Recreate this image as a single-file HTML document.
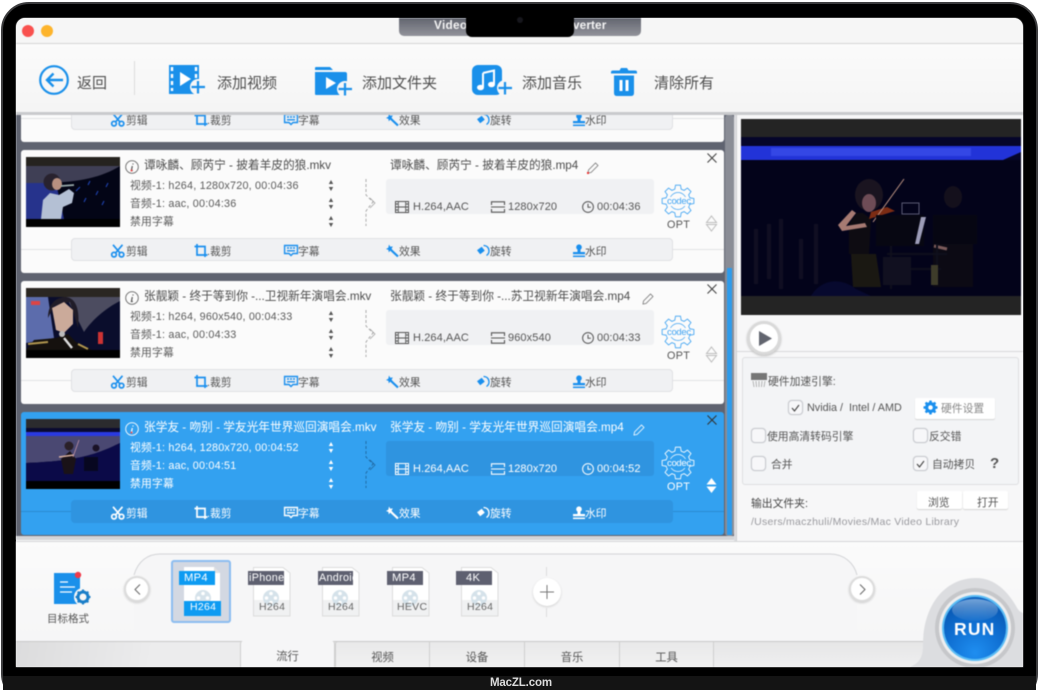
<!DOCTYPE html>
<html lang="zh"><head><meta charset="utf-8"><title>Video Converter</title>
<style>
*{box-sizing:border-box}
html,body{margin:0;padding:0;background:#fff;width:1040px;height:690px;overflow:hidden}
body{font-family:"Liberation Sans","Noto Sans CJK SC",sans-serif;color:#555;position:relative}
.a,.t{position:absolute}
.t{white-space:nowrap;line-height:16px;margin-top:-8px}
#bezel{left:1px;top:2px;width:1037px;height:700px;background:#000;border:2px solid #3c3c3e;border-radius:28px}
#chin{left:3px;top:676px;width:1033px;height:14px;background:#141414}
#scr{left:16px;top:18px;width:1007px;height:649px;background:#f6f6f6;border-radius:9px 9px 0 0;overflow:hidden}
#ui{left:0;top:0;width:1040px;height:690px;filter:blur(.4px)}
.tb{font-size:15px;color:#4f4f4f}
.list{left:16px;top:115px;width:718px;height:425px;background:#5f6370;overflow:hidden}
.c{left:-16px;width:0;height:0}
.c .bg{position:absolute;left:21px;top:0;width:703px;height:123px;background:#fbfbfb;border-radius:3px}
.c .ln{position:absolute;left:21px;top:99px;width:703px;height:1px;background:#e2e3e5}
.c .bar{position:absolute;left:71px;top:88px;width:602px;height:23px;background:#f0f1f3;border:1px solid #e0e1e4;border-radius:4px}
.c .box{position:absolute;left:386px;top:29px;width:268px;height:35px;background:#f0f1f3;border-radius:3px}
.c .th{position:absolute;left:26px;top:7px;width:94px;height:70px;display:block}
.c .ti{font-size:11.7px;color:#4c4c4c;top:16px}
.c .r{font-size:10.8px;letter-spacing:.2px;color:#5a5a5a;left:130px}
.c .m{font-size:11px;letter-spacing:.1px;color:#555;top:47px}
.c .k{font-size:10.8px;color:#555;top:102px}
.c svg{position:absolute;overflow:visible}
.c .ic{color:#1a8fee}
.c .g{color:#555}
.c .gc{color:#3fa3f2}
.c .opt{font-size:10.8px;color:#555;left:667px;top:75px;letter-spacing:.3px}
.c .cd{font-size:9.5px;color:#3fa3f2;left:667px;top:51px;width:22px;text-align:center;letter-spacing:-.3px;line-height:9px;margin-top:-4px;background:#fbfbfb}
.s .bg{background:#33a1f0}
.s .ln{background:#2a8ad2}
.s .bar,.s .box{background:#2f94e0;border-color:#2f94e0}
.s .ti,.s .r,.s .m,.s .k,.s .opt{color:#fff}
.s .cd{color:#fff;background:#33a1f0}
.s .ic,.s .g,.s .gc{color:#fff}
.cb{position:absolute;width:15px;height:15px;background:#f7f7f9;border:1px solid #c8cad0;border-radius:4px;box-shadow:0 0 1px #ccc}
.p{font-size:10.8px;color:#555}
.btn{position:absolute;background:#fff;box-shadow:0 1px 1px #d5d5d5;border-radius:2px}
.fmt{font-size:10.5px;letter-spacing:.3px}
.tab{position:absolute;top:641px;height:26px;width:95px;text-align:center;font-size:11.3px;line-height:32px;color:#555;background:linear-gradient(#e9e9ea,#f1f1f1);border-right:1px solid #cfcfcf;border-top:1px solid #c9c9c9}
</style></head><body>
<svg width="0" height="0" style="position:absolute"><defs>
<symbol id="sc" viewBox="0 0 14 14" overflow="visible"><circle cx="3" cy="10.6" r="2.3" fill="none" stroke="currentColor" stroke-width="1.7"/><circle cx="10.5" cy="10.6" r="2.3" fill="none" stroke="currentColor" stroke-width="1.7"/><path d="M2 .8L9 9M11.5.8L4.5 9" stroke="currentColor" stroke-width="1.7" fill="none"/></symbol>
<symbol id="cr" viewBox="0 0 14 14" overflow="visible"><path d="M.5 2.5H11V13M3 0V11H13.5" stroke="currentColor" stroke-width="1.7" fill="none"/></symbol>
<symbol id="su" viewBox="0 0 14 14" overflow="visible"><path d="M.6 1.5H13.4V9.5H9L7 11.5 5 9.5H.6Z" fill="none" stroke="currentColor" stroke-width="1.4"/><path d="M3 4H5M6 4H8M9 4H11M3 6.8H11" stroke="currentColor" stroke-width="1.4"/></symbol>
<symbol id="wa" viewBox="0 0 14 14" overflow="visible"><path d="M5.5 5.5L13 12.5" stroke="currentColor" stroke-width="2.2"/><path d="M4 .5L5.3 2.8 7.8 2.4 6.6 4.7 8 6.8 5.4 6.4 3.8 8.4 3.4 5.9 1 5 3.3 3.7Z" fill="currentColor"/></symbol>
<symbol id="ro" viewBox="0 0 14 14" overflow="visible"><path d="M1 6.3L5.7 2.7 8.8 6.6 4.2 10.2Z" fill="currentColor"/><path d="M7.5 1.5C11 1.5 13 4 13 7 13 9 12 10.5 10.5 11.5" fill="none" stroke="currentColor" stroke-width="1.3"/></symbol>
<symbol id="st" viewBox="0 0 14 14" overflow="visible"><circle cx="7" cy="3.2" r="2.8" fill="currentColor"/><path d="M5.5 5H8.5V8H13V10.3H1V8H5.5Z" fill="currentColor"/><path d="M1 12.3H13" stroke="currentColor" stroke-width="1.5"/></symbol>
<symbol id="fi" viewBox="0 0 14 12" overflow="visible"><rect x=".5" y=".5" width="13" height="11" fill="none" stroke="currentColor"/><path d="M3.3.5V11.5M10.7.5V11.5M3.3 6H10.7M.5 3H3.3M.5 6H3.3M.5 9H3.3M10.7 3H13.5M10.7 6H13.5M10.7 9H13.5" stroke="currentColor" stroke-width=".9"/></symbol>
<symbol id="si" viewBox="0 0 14 12" overflow="visible"><path d="M.5 4V.8H13.5V4M.5 8V11.2H13.5V8M0 6H14" fill="none" stroke="currentColor" stroke-width="1.1"/></symbol>
<symbol id="cl" viewBox="0 0 12 12" overflow="visible"><circle cx="6" cy="6" r="5.4" fill="none" stroke="currentColor" stroke-width="1"/><path d="M6 2.8V6.3H8.8" fill="none" stroke="currentColor"/></symbol>
<symbol id="gr" viewBox="-18 -18 36 36" overflow="visible"><path d="M-3.36-12.56L-2.66-16.79 2.66-16.79 3.36-12.56 6.5-11.26 9.99-13.75 13.75-9.99 11.26-6.5 12.56-3.36 16.79-2.66 16.79 2.66 12.56 3.36 11.26 6.5 13.75 9.99 9.99 13.75 6.5 11.26 3.36 12.56 2.66 16.79-2.66 16.79-3.36 12.56-6.5 11.26-9.99 13.75-13.75 9.99-11.26 6.5-12.56 3.36-16.79 2.66-16.79-2.66-12.56-3.36-11.26-6.5-13.75-9.99-9.99-13.75-6.5-11.26Z" fill="none" stroke="currentColor" stroke-width=".9"/><circle r="9" fill="none" stroke="currentColor" stroke-width=".7"/></symbol>
<symbol id="ud" viewBox="0 0 6 13" overflow="visible"><path d="M3 1L5.2 5H.8ZM3 12L5.2 8H.8Z" fill="currentColor"/></symbol>
<symbol id="dc" viewBox="0 0 12 18" overflow="visible"><path d="M1 0V16L5 20 8 23 4 28 1 32V47" fill="none" stroke="currentColor" stroke-width=".8" stroke-dasharray="3 2"/><path d="M5 19L10 24 5 29" fill="none" stroke="currentColor" stroke-width=".7"/></symbol>
<symbol id="pe" viewBox="0 0 12 12" overflow="visible"><path d="M1.5 8L8.5 1 11 3.5 4 10.5 1 11Z" fill="none" stroke="currentColor" stroke-width=".8"/></symbol>
<symbol id="reel" viewBox="0 0 18 18" overflow="visible"><circle cx="9" cy="9" r="8" fill="#d5e2ea"/><circle cx="9" cy="4.5" r="1.8" fill="#fff"/><circle cx="9" cy="13.5" r="1.8" fill="#fff"/><circle cx="4.5" cy="9" r="1.8" fill="#fff"/><circle cx="13.5" cy="9" r="1.8" fill="#fff"/></symbol>
</defs></svg>

<div class="a" id="bezel"></div>
<div class="a" id="chin"></div>
<div class="t" style="left:490px;top:683px;color:#ddd;font-size:11.5px;font-weight:bold;letter-spacing:-.15px">MacZL.com</div>
<div class="a" id="scr"></div>

<div class="a" id="ui">
<!-- title bar -->
<div class="a" style="left:16px;top:18px;width:1007px;height:26px;background:#f6f6f6;border-bottom:1px solid #d4d4d4;border-radius:9px 9px 0 0"></div>
<div class="a" style="left:399px;top:18px;width:242px;height:18px;background:linear-gradient(#62656f,#92939b);border-radius:0 0 5px 5px"></div>
<div class="t" style="left:434px;top:25px;color:#f4f4f4;font-size:11.8px;font-weight:bold;letter-spacing:.3px">Video</div>
<div class="t" style="left:573px;top:25px;color:#f4f4f4;font-size:11.8px;font-weight:bold;letter-spacing:.1px">verter</div>
<div class="a" style="left:466px;top:14px;width:108px;height:23px;background:#000;border-radius:0 0 6px 6px"></div>
<div class="a" style="left:517px;top:17px;width:6px;height:6px;border-radius:50%;background:#16161c"></div>
<div class="a" style="left:22px;top:25px;width:12px;height:12px;border-radius:50%;background:#f9514e"></div>
<div class="a" style="left:41px;top:25px;width:12px;height:12px;border-radius:50%;background:#fdb42c"></div>

<!-- toolbar -->
<div class="a" style="left:16px;top:44px;width:1007px;height:68px;background:linear-gradient(#fbfbfb,#f5f5f5)"></div>
<div class="a" style="left:16px;top:112px;width:1007px;height:3px;background:#c9cacd"></div>
<div class="a" style="left:134px;top:61px;width:1px;height:34px;background:#dcdcdc"></div>
<svg class="a" style="left:38px;top:64px" width="32" height="32" viewBox="0 0 32 32"><circle cx="16" cy="16" r="13.8" fill="none" stroke="#1a90ea" stroke-width="2.2"/><path d="M25 16H9M15.5 9.5L9 16 15.5 22.5" fill="none" stroke="#1a90ea" stroke-width="2.4"/></svg>
<div class="t tb" style="left:77px;top:84px">返回</div>
<svg class="a" style="left:169px;top:65px" width="37" height="30" viewBox="0 0 37 30"><rect x="0" y="0" width="30" height="29" fill="#1a90ea"/><path d="M3 2v4M3 9v4M3 16v4M3 23v3M27 2v4M27 9v4" stroke="#fff" stroke-width="2.4"/><path d="M11 7L22 14 11 21Z" fill="#fff"/><circle cx="29" cy="22" r="8" fill="#f7f7f7"/><path d="M29 16V28.5M22.5 22H36" stroke="#1a90ea" stroke-width="2.2"/></svg>
<div class="t tb" style="left:217px;top:84px">添加视频</div>
<svg class="a" style="left:315px;top:66px" width="38" height="30" viewBox="0 0 38 30"><path d="M0 2Q0 1 1 1H15L18 4H0Z" fill="#1a90ea"/><path d="M0 6H30Q32 6 32 8V29H1Q0 29 0 28Z" fill="#1a90ea"/><path d="M11 11L21 17 11 23Z" fill="#fff"/><circle cx="30" cy="23" r="8" fill="#f7f7f7"/><path d="M30 17V29.5M23.5 23H37" stroke="#1a90ea" stroke-width="2.2"/></svg>
<div class="t tb" style="left:362px;top:84px">添加文件夹</div>
<svg class="a" style="left:472px;top:65px" width="41" height="31" viewBox="0 0 41 31"><rect width="30" height="30" rx="6" fill="#1a90ea"/><path d="M11 8L22 5.5V19" fill="none" stroke="#fff" stroke-width="2"/><path d="M11 8V22" stroke="#fff" stroke-width="2"/><ellipse cx="8.5" cy="22.5" rx="3.5" ry="2.8" fill="#fff"/><ellipse cx="19.5" cy="19.5" rx="3.5" ry="2.8" fill="#fff"/><circle cx="33" cy="23" r="8" fill="#f7f7f7"/><path d="M33 17V29.5M26.5 23H40" stroke="#1a90ea" stroke-width="2.2"/></svg>
<div class="t tb" style="left:522px;top:84px">添加音乐</div>
<svg class="a" style="left:611px;top:67px" width="26" height="30" viewBox="0 0 26 30"><path d="M0 5Q0 3.5 2 3.5H8.5L10 1H16L17.5 3.5H24Q26 3.5 26 5V6.5H0Z" fill="#1a90ea"/><path d="M3 8.5H23V26Q23 29 20 29H6Q3 29 3 26Z" fill="#1a90ea"/><rect x="8.5" y="13" width="3" height="11" fill="#fff"/><rect x="14.5" y="13" width="3" height="11" fill="#fff"/></svg>
<div class="t tb" style="left:654px;top:84px">清除所有</div>

<!-- list -->
<div class="a list">
<!-- card 1 -->
<div class="a c" style="top:-96px"><div class="bg"></div><div class="ln"></div><div class="bar"></div>
<svg class="ic" style="left:111px;top:94px" width="14" height="14"><use href="#sc"/></svg><div class="t k" style="left:126px">剪辑</div>
<svg class="ic" style="left:194px;top:94px" width="14" height="14"><use href="#cr"/></svg><div class="t k" style="left:207px">.裁剪</div>
<svg class="ic" style="left:284px;top:94px" width="14" height="14"><use href="#su"/></svg><div class="t k" style="left:298px">字幕</div>
<svg class="ic" style="left:385px;top:94px" width="14" height="14"><use href="#wa"/></svg><div class="t k" style="left:399px">效果</div>
<svg class="ic" style="left:476px;top:94px" width="14" height="14"><use href="#ro"/></svg><div class="t k" style="left:490px">旋转</div>
<svg class="ic" style="left:572px;top:94px" width="14" height="14"><use href="#st"/></svg><div class="t k" style="left:585px">水印</div>
</div>

<!-- card 2 -->
<div class="a c" style="top:35px"><div class="bg"></div><div class="ln"></div><div class="bar"></div>
<svg class="th" viewBox="0 0 94 70"><rect width="94" height="70" fill="#030516"/><rect width="94" height="9" fill="#25231f"/><path d="M0 9H94C76 20 55 25 20 26L0 26Z" fill="#3f3f55"/><path d="M0 26H30L38 62H0Z" fill="#26338c"/><path d="M50 34L54 30M62 28L64 24M70 38L72 34M80 30L82 26M58 45L60 41M76 48L78 44" stroke="#1d3fa8" stroke-width="1.2"/><circle cx="26" cy="25" r="8.5" fill="#28222e"/><ellipse cx="31" cy="27" rx="5" ry="6" fill="#b89080"/><path d="M15 62L17 43 24 36 33 38 43 32 48 36 46 46 37 50 35 62Z" fill="#b4c0d4"/><path d="M35 29L48 28" stroke="#9aa" stroke-width="1.8"/><rect y="62" width="94" height="8" fill="#000"/></svg>
<svg style="left:125px;top:10px" width="14" height="14" viewBox="0 0 14 14"><circle cx="7" cy="7" r="6.3" fill="none" stroke="#666" stroke-width=".9"/><path d="M8 3.5V4.5M7.3 6L6.4 10.5H7.8" fill="none" stroke="#555" stroke-width="1.2"/><circle cx="6.5" cy="10.5" r="1" fill="#e44"/></svg>
<div class="t ti" style="left:144px">谭咏麟、顾芮宁 - 披着羊皮的狼.mkv</div>
<div class="t r" style="top:36px">视频-1: h264, 1280x720, 00:04:36</div><svg class="g" style="left:328px;top:29px" width="6" height="13"><use href="#ud"/></svg>
<div class="t r" style="top:54px">音频-1: aac, 00:04:36</div><svg class="g" style="left:328px;top:47px" width="6" height="13"><use href="#ud"/></svg>
<div class="t r" style="top:72px">禁用字幕</div><svg class="g" style="left:328px;top:65px" width="6" height="13"><use href="#ud"/></svg>
<svg style="left:365px;top:29px;color:#999" width="12" height="18"><use href="#dc"/></svg>
<div class="t ti" style="left:390px">谭咏麟、顾芮宁 - 披着羊皮的狼.mp4</div>
<svg style="left:587px;top:12px;color:#777" width="12" height="12"><use href="#pe"/></svg><div class="a" style="left:587px;top:22px;width:2px;height:2px;background:#e33"></div>
<div class="box"></div>
<svg class="g" style="left:395px;top:51px" width="14" height="12"><use href="#fi"/></svg><div class="t m" style="left:413px;top:57px">H.264,AAC</div>
<svg class="g" style="left:491px;top:51px" width="14" height="12"><use href="#si"/></svg><div class="t m" style="left:508px;top:57px">1280x720</div>
<svg class="g" style="left:582px;top:51px" width="12" height="12"><use href="#cl"/></svg><div class="t m" style="left:597px;top:57px">00:04:36</div>
<svg class="gc" style="left:661px;top:34px" width="34" height="34"><use href="#gr"/></svg><div class="t cd">codec</div><div class="t opt">OPT</div>
<svg style="left:706px;top:65px;color:#bbb" width="11" height="17" viewBox="0 0 11 17"><path d="M5.5 1L10.5 7.5H.5ZM5.5 16L10.5 9.5H.5Z" fill="none" stroke="currentColor"/></svg>
<svg style="left:707px;top:3px;color:#444" width="10" height="10" viewBox="0 0 10 10"><path d="M.5.5L9.5 9.5M9.5.5L.5 9.5" stroke="currentColor" stroke-width="1.1"/></svg>
<svg class="ic" style="left:111px;top:94px" width="14" height="14"><use href="#sc"/></svg><div class="t k" style="left:126px">剪辑</div>
<svg class="ic" style="left:194px;top:94px" width="14" height="14"><use href="#cr"/></svg><div class="t k" style="left:207px">.裁剪</div>
<svg class="ic" style="left:284px;top:94px" width="14" height="14"><use href="#su"/></svg><div class="t k" style="left:298px">字幕</div>
<svg class="ic" style="left:385px;top:94px" width="14" height="14"><use href="#wa"/></svg><div class="t k" style="left:399px">效果</div>
<svg class="ic" style="left:476px;top:94px" width="14" height="14"><use href="#ro"/></svg><div class="t k" style="left:490px">旋转</div>
<svg class="ic" style="left:572px;top:94px" width="14" height="14"><use href="#st"/></svg><div class="t k" style="left:585px">水印</div>
</div>

<!-- card 3 -->
<div class="a c" style="top:166px"><div class="bg"></div><div class="ln"></div><div class="bar"></div>
<svg class="th" viewBox="0 0 94 70"><rect width="94" height="70" fill="#0a0d2c"/><rect width="94" height="9" fill="#2a2622"/><path d="M40 9H94V13C80 20 66 32 58 44L48 24Z" fill="#4c4c60"/><path d="M0 9H22L28 50 0 55Z" fill="#5c6cac"/><path d="M22 30C22 14 32 9 40 9 50 10 54 22 52 40L44 14 28 18Z" fill="#201c28"/><path d="M26 20L38 14 47 22 47 36 38 45 30 42Z" fill="#cbaa9a"/><path d="M0 62L8 52 30 50 42 46 50 54 66 62Z" fill="#15110e"/><path d="M2 56L22 54M52 56L62 61" stroke="#b0964f" stroke-width="2"/><path d="M38 50L46 60" stroke="#ddd" stroke-width="2.5"/><circle cx="36" cy="46" r="3" fill="#bbb"/><rect x="72" y="44" width="5" height="12" fill="#c33"/><rect x="5" y="13" width="9" height="4" fill="#d44"/><rect y="62" width="94" height="8" fill="#000"/></svg>
<svg style="left:125px;top:10px" width="14" height="14" viewBox="0 0 14 14"><circle cx="7" cy="7" r="6.3" fill="none" stroke="#666" stroke-width=".9"/><path d="M8 3.5V4.5M7.3 6L6.4 10.5H7.8" fill="none" stroke="#555" stroke-width="1.2"/></svg>
<div class="t ti" style="left:144px">张靓颖 - 终于等到你 -...卫视新年演唱会.mkv</div>
<div class="t r" style="top:36px">视频-1: h264, 960x540, 00:04:33</div><svg class="g" style="left:328px;top:29px" width="6" height="13"><use href="#ud"/></svg>
<div class="t r" style="top:54px">音频-1: aac, 00:04:33</div><svg class="g" style="left:328px;top:47px" width="6" height="13"><use href="#ud"/></svg>
<div class="t r" style="top:72px">禁用字幕</div><svg class="g" style="left:328px;top:65px" width="6" height="13"><use href="#ud"/></svg>
<svg style="left:365px;top:29px;color:#999" width="12" height="18"><use href="#dc"/></svg>
<div class="t ti" style="left:390px">张靓颖 - 终于等到你 -...苏卫视新年演唱会.mp4</div>
<svg style="left:642px;top:12px;color:#777" width="12" height="12"><use href="#pe"/></svg>
<div class="box"></div>
<svg class="g" style="left:395px;top:51px" width="14" height="12"><use href="#fi"/></svg><div class="t m" style="left:413px;top:57px">H.264,AAC</div>
<svg class="g" style="left:491px;top:51px" width="14" height="12"><use href="#si"/></svg><div class="t m" style="left:508px;top:57px">960x540</div>
<svg class="g" style="left:582px;top:51px" width="12" height="12"><use href="#cl"/></svg><div class="t m" style="left:597px;top:57px">00:04:33</div>
<svg class="gc" style="left:661px;top:34px" width="34" height="34"><use href="#gr"/></svg><div class="t cd">codec</div><div class="t opt">OPT</div>
<svg style="left:706px;top:65px;color:#bbb" width="11" height="17" viewBox="0 0 11 17"><path d="M5.5 1L10.5 7.5H.5ZM5.5 16L10.5 9.5H.5Z" fill="none" stroke="currentColor"/></svg>
<svg style="left:707px;top:3px;color:#444" width="10" height="10" viewBox="0 0 10 10"><path d="M.5.5L9.5 9.5M9.5.5L.5 9.5" stroke="currentColor" stroke-width="1.1"/></svg>
<svg class="ic" style="left:111px;top:94px" width="14" height="14"><use href="#sc"/></svg><div class="t k" style="left:126px">剪辑</div>
<svg class="ic" style="left:194px;top:94px" width="14" height="14"><use href="#cr"/></svg><div class="t k" style="left:207px">.裁剪</div>
<svg class="ic" style="left:284px;top:94px" width="14" height="14"><use href="#su"/></svg><div class="t k" style="left:298px">字幕</div>
<svg class="ic" style="left:385px;top:94px" width="14" height="14"><use href="#wa"/></svg><div class="t k" style="left:399px">效果</div>
<svg class="ic" style="left:476px;top:94px" width="14" height="14"><use href="#ro"/></svg><div class="t k" style="left:490px">旋转</div>
<svg class="ic" style="left:572px;top:94px" width="14" height="14"><use href="#st"/></svg><div class="t k" style="left:585px">水印</div>
</div>

<!-- card 4 selected -->
<div class="a c s" style="top:297px"><div class="bg"></div><div class="ln"></div><div class="bar"></div>
<svg class="th" viewBox="0 0 94 70"><rect width="94" height="70" fill="#04041c"/><rect width="94" height="9" fill="#2b2b2e"/><rect y="9" width="94" height="4" fill="#0a0a30"/><rect y="13" width="94" height="4" fill="#2a3ae0"/><path d="M0 17H94V24C70 36 50 42 0 44Z" fill="#4a4872"/><path d="M0 44C50 42 70 36 94 24V62H0Z" fill="#0b0a48"/><circle cx="43" cy="27" r="4.5" fill="#2a2028"/><path d="M35 40L44 32 50 40 47 55H38Z" fill="#1a1218"/><path d="M33 38L48 36" stroke="#d8b0a0" stroke-width="1.6"/><path d="M47 38L53 21" stroke="#c9a" stroke-width=".7"/><rect x="58" y="38" width="14" height="14" fill="#070720"/><circle cx="70" cy="29" r="3.5" fill="#1a1226"/><rect y="62" width="94" height="8" fill="#000"/></svg>
<svg style="left:125px;top:10px" width="14" height="14" viewBox="0 0 14 14"><circle cx="7" cy="7" r="6.3" fill="none" stroke="#fff" stroke-width=".9"/><path d="M8 3.5V4.5M7.3 6L6.4 10.5H7.8" fill="none" stroke="#fff" stroke-width="1.2"/><circle cx="6.5" cy="10.5" r="1" fill="#e44"/></svg>
<div class="t ti" style="left:144px">张学友 - 吻别 - 学友光年世界巡回演唱会.mkv</div>
<div class="t r" style="top:36px">视频-1: h264, 1280x720, 00:04:52</div><svg class="g" style="left:328px;top:29px" width="6" height="13"><use href="#ud"/></svg>
<div class="t r" style="top:54px">音频-1: aac, 00:04:51</div><svg class="g" style="left:328px;top:47px" width="6" height="13"><use href="#ud"/></svg>
<div class="t r" style="top:72px">禁用字幕</div><svg class="g" style="left:328px;top:65px" width="6" height="13"><use href="#ud"/></svg>
<svg style="left:365px;top:29px;color:#1d5f94" width="12" height="18"><use href="#dc"/></svg>
<div class="t ti" style="left:390px">张学友 - 吻别 - 学友光年世界巡回演唱会.mp4</div>
<svg style="left:633px;top:12px;color:#fff" width="12" height="12"><use href="#pe"/></svg>
<div class="box"></div>
<svg class="g" style="left:395px;top:51px" width="14" height="12"><use href="#fi"/></svg><div class="t m" style="left:413px;top:57px">H.264,AAC</div>
<svg class="g" style="left:491px;top:51px" width="14" height="12"><use href="#si"/></svg><div class="t m" style="left:508px;top:57px">1280x720</div>
<svg class="g" style="left:582px;top:51px" width="12" height="12"><use href="#cl"/></svg><div class="t m" style="left:597px;top:57px">00:04:52</div>
<svg class="gc" style="left:661px;top:34px" width="34" height="34"><use href="#gr"/></svg><div class="t cd">codec</div><div class="t opt">OPT</div>
<svg style="left:706px;top:65px;color:#fff" width="11" height="17" viewBox="0 0 11 17"><path d="M5.5 1L10.5 7.5H.5ZM5.5 16L10.5 9.5H.5Z" fill="currentColor"/></svg>
<svg style="left:707px;top:3px;color:#333" width="10" height="10" viewBox="0 0 10 10"><path d="M.5.5L9.5 9.5M9.5.5L.5 9.5" stroke="currentColor" stroke-width="1.1"/></svg>
<svg class="ic" style="left:111px;top:94px" width="14" height="14"><use href="#sc"/></svg><div class="t k" style="left:126px">剪辑</div>
<svg class="ic" style="left:194px;top:94px" width="14" height="14"><use href="#cr"/></svg><div class="t k" style="left:207px">.裁剪</div>
<svg class="ic" style="left:284px;top:94px" width="14" height="14"><use href="#su"/></svg><div class="t k" style="left:298px">字幕</div>
<svg class="ic" style="left:385px;top:94px" width="14" height="14"><use href="#wa"/></svg><div class="t k" style="left:399px">效果</div>
<svg class="ic" style="left:476px;top:94px" width="14" height="14"><use href="#ro"/></svg><div class="t k" style="left:490px">旋转</div>
<svg class="ic" style="left:572px;top:94px" width="14" height="14"><use href="#st"/></svg><div class="t k" style="left:585px">水印</div>
</div>
<!-- scrollbar -->
<div class="a" style="left:709px;top:0;width:9px;height:421px;background:#8a8d96;border-radius:3px"></div>
<div class="a" style="left:711px;top:153px;width:5px;height:267px;background:#2d9bec"></div>
<div class="a" style="left:0;top:421px;width:718px;height:4px;background:#d4d5d8"></div>
</div>

<!-- right pane -->
<div class="a" style="left:734px;top:115px;width:289px;height:426px;background:#f7f7f8;border-left:2px solid #dcdde0"></div>
<div class="a" style="left:736px;top:115px;width:1px;height:426px;background:#cfd0d3"></div>
<svg class="a" style="left:741px;top:119px" width="280" height="196" viewBox="0 0 280 196">
<rect width="280" height="196" fill="#03031a"/><rect width="280" height="18" fill="#242424"/><rect y="18" width="280" height="9" fill="#05052a"/>
<rect y="27" width="280" height="14" fill="#2233d8"/><rect y="29" x="30" width="200" height="8" fill="#3a4ce8" opacity=".8"/><path d="M262 41L280 33V41Z" fill="#05052a"/>
<path d="M15 110V165M28 105V160M40 100V170M60 120V160M75 105V165" stroke="#100e22" stroke-width="4"/>
<ellipse cx="128" cy="76" rx="14" ry="16" fill="#1a1420"/><ellipse cx="128" cy="84" rx="7" ry="9" fill="#6e4c56"/>
<path d="M108 105L116 94 122 94 130 100 128 135H108Z" fill="#0e0c12"/><path d="M97 106L111 91 115 94 105 107 124 104 126 108 101 112Z" fill="#a67a72"/>
<path d="M128 100L154 92 146 88 130 93Z" fill="#7c2c14"/><path d="M132 103L163 60" stroke="#b89080" stroke-width="1"/>
<path d="M110 135H135L140 168H112Z" fill="#1a1812"/>
<path d="M135 96H183V127H135Z" fill="#070712"/><path d="M180 98L174 125 178 125 185 98Z" fill="#9c9cb8"/><rect x="161" y="84" width="17" height="11" fill="none" stroke="#5a5a74"/>
<ellipse cx="212" cy="78" rx="9" ry="11" fill="#14101c"/><path d="M192 96H236V125H192Z" fill="#060612"/><path d="M192 125H232V168H192Z" fill="#0c0a14"/><path d="M193 127L206 130" stroke="#7a5a5a" stroke-width="3"/>
<path d="M150 127V170M196 125V165M146 135H206M160 150H200" stroke="#0f0f1c" stroke-width="2"/><rect x="190" y="146" width="7" height="20" fill="#3e3c2a"/><rect x="142" y="138" width="28" height="28" fill="#111020"/>
<rect y="177" width="280" height="19" fill="#242424"/><path d="M70 177C80 160 100 158 115 170L130 177Z" fill="#07092e"/>
</svg>
<div class="a" style="left:737px;top:351px;width:286px;height:1px;background:#d9d9db"></div>
<div class="a" style="left:747px;top:321px;width:34px;height:34px;border-radius:50%;background:#fff;border:3px solid #d9d9d9;box-shadow:0 1px 2px #bbb"></div>
<svg class="a" style="left:759px;top:331px" width="13" height="15"><path d="M0 0L13 7.5 0 15Z" fill="#62656f"/></svg>
<div class="a" style="left:742px;top:357px;width:277px;height:128px;background:#f3f4f6;border:1px solid #dedfe2;border-radius:3px"></div>
<svg class="a" style="left:751px;top:373px" width="17" height="15" viewBox="0 0 17 15"><rect x="0" y="0" width="16" height="7" fill="#767676"/><path d="M2 8L3 14M5 8L5.5 14M8 8V14M11 8L10.5 14M14 8L13 14" stroke="#999" stroke-width=".7"/></svg>
<div class="t p" style="left:768px;top:382px">硬件加速引擎:</div>
<div class="cb" style="left:788px;top:400px"></div><svg class="a" style="left:791px;top:404px" width="9" height="8"><path d="M1 4L3.5 7 8 1" fill="none" stroke="#444" stroke-width="1.1"/></svg>
<div class="t p" style="left:807px;top:408px">Nvidia /&nbsp; Intel / AMD</div>
<div class="btn" style="left:915px;top:398px;width:80px;height:21px"></div>
<svg class="a" style="left:923px;top:400px;color:#1a8fee" width="15" height="15" viewBox="-18 -18 36 36"><path d="M-3.36-12.56L-2.66-16.79 2.66-16.79 3.36-12.56 6.5-11.26 9.99-13.75 13.75-9.99 11.26-6.5 12.56-3.36 16.79-2.66 16.79 2.66 12.56 3.36 11.26 6.5 13.75 9.99 9.99 13.75 6.5 11.26 3.36 12.56 2.66 16.79-2.66 16.79-3.36 12.56-6.5 11.26-9.99 13.75-13.75 9.99-11.26 6.5-12.56 3.36-16.79 2.66-16.79-2.66-12.56-3.36-11.26-6.5-13.75-9.99-9.99-13.75-6.5-11.26Z" fill="currentColor"/><circle r="5.5" fill="#fff"/></svg>
<div class="t p" style="left:941px;top:409px;color:#888">硬件设置</div>
<div class="cb" style="left:751px;top:428px"></div><div class="t p" style="left:767px;top:437px">使用高清转码引擎</div>
<div class="cb" style="left:913px;top:428px"></div><div class="t p" style="left:929px;top:437px">反交错</div>
<div class="cb" style="left:751px;top:456px"></div><div class="t p" style="left:771px;top:465px">合并</div>
<div class="cb" style="left:913px;top:456px"></div><svg class="a" style="left:916px;top:460px" width="9" height="8"><path d="M1 4L3.5 7 8 1" fill="none" stroke="#444" stroke-width="1.1"/></svg>
<div class="t p" style="left:932px;top:465px">自动拷贝</div>
<div class="t" style="left:990px;top:464px;font-size:15px;font-weight:bold;color:#555">?</div>
<div class="t p" style="left:751px;top:504px;color:#444">输出文件夹:</div>
<div class="btn" style="left:917px;top:491px;width:45px;height:18px"></div><div class="btn" style="left:963px;top:491px;width:45px;height:18px"></div>
<div class="t p" style="left:928px;top:503px">浏览</div><div class="t p" style="left:977px;top:503px">打开</div>
<div class="t" style="left:751px;top:522px;font-size:10.5px;letter-spacing:.25px;color:#9a9a9f">/Users/maczhuli/Movies/Mac Video Library</div>

<!-- bottom -->
<div class="a" style="left:16px;top:541px;width:1007px;height:126px;background:linear-gradient(#fbfbfb,#f5f5f6);border-top:1px solid #d5d6d8"></div>
<svg class="a" style="left:16px;top:541px" width="1007" height="126"><path d="M118 34C122 20 132 13 144 13H814C828 13 838 22 841 34L841 100H118Z" fill="#f6f6f7"/><path d="M118 34C122 20 132 13 144 13H814C828 13 838 22 841 34" fill="none" stroke="#d2d3d6" stroke-width="1"/></svg>
<svg class="a" style="left:53px;top:571px" width="38" height="36" viewBox="0 0 38 36"><path d="M1 2H25L27 4V33H1Z" fill="#1a90ea"/><path d="M7 11H15M7 16H22M7 21H19" stroke="#fff" stroke-width="1.3"/><circle cx="25" cy="4" r="3.2" fill="#f03a4a"/><g transform="translate(30,26)"><circle r="9" fill="#f7f7f7"/><circle r="5" fill="none" stroke="#1a7ec8" stroke-width="3"/><path d="M0-7.5V-5M0 5V7.5M-7.5 0H-5M5 0H7.5M-5.3-5.3L-3.5-3.5M3.5 3.5L5.3 5.3M-5.3 5.3L-3.5 3.5M3.5-3.5L5.3-5.3" stroke="#1a7ec8" stroke-width="2"/></g></svg>
<div class="t" style="left:47px;top:619px;font-size:10.5px;color:#555">目标格式</div>
<div class="a" style="left:124px;top:576px;width:26px;height:26px;border-radius:50%;background:#fff;border:2px solid #dcdcdc;box-shadow:0 1px 2px #ccc"></div>
<svg class="a" style="left:134px;top:584px" width="7" height="11"><path d="M6 .5L1 5.5 6 10.5" fill="none" stroke="#666"/></svg>
<div class="a" style="left:849px;top:576px;width:26px;height:26px;border-radius:50%;background:#fff;border:2px solid #dcdcdc;box-shadow:0 1px 2px #ccc"></div>
<svg class="a" style="left:859px;top:584px" width="7" height="11"><path d="M1 .5L6 5.5 1 10.5" fill="none" stroke="#666"/></svg>

<!-- format items -->
<div class="a" style="left:171px;top:560px;width:60px;height:63px;background:#d3d8e2;border:2px solid #8cbdf0;border-radius:3px"></div>
<svg class="a" style="left:184px;top:567px" width="37" height="50"><path d="M0 0H30L36 6V49H0Z" fill="#fff"/><path d="M30 0V6H36" fill="#e0e0e0"/></svg>
<svg class="a" style="left:194px;top:589px" width="18" height="18"><use href="#reel"/></svg>
<div class="a" style="left:184px;top:601px;width:37px;height:15px;background:#0d9bf2"></div>
<div class="a" style="left:179px;top:571px;width:36px;height:14px;background:#0d9bf2"></div>
<div class="t fmt" style="left:184px;top:578px;color:#fff;font-size:11.2px">MP4</div>
<div class="t fmt" style="left:190px;top:607px;color:#fff">H264</div>

<svg class="a" style="left:253px;top:567px" width="38" height="50"><path d="M.5.5H30L37 6V49H.5Z" fill="#fff" stroke="#dcdcdc"/><rect x="1" y="33" width="35.5" height="15.5" fill="#f0f1f2"/></svg>
<svg class="a" style="left:262px;top:589px" width="18" height="18"><use href="#reel"/></svg>
<div class="a" style="left:248px;top:571px;width:36px;height:14px;background:#5e6070;overflow:hidden"><div class="t fmt" style="left:1px;top:7px;color:#fff;font-size:10.8px">iPhone</div></div>
<div class="t fmt" style="left:259px;top:607px;color:#666">H264</div>

<svg class="a" style="left:322px;top:567px" width="38" height="50"><path d="M.5.5H30L37 6V49H.5Z" fill="#fff" stroke="#dcdcdc"/><rect x="1" y="33" width="35.5" height="15.5" fill="#f0f1f2"/></svg>
<svg class="a" style="left:331px;top:589px" width="18" height="18"><use href="#reel"/></svg>
<div class="a" style="left:318px;top:571px;width:35px;height:14px;background:#5e6070;overflow:hidden"><div class="t fmt" style="left:1px;top:7px;color:#fff;font-size:10.8px">Android</div></div>
<div class="t fmt" style="left:328px;top:607px;color:#666">H264</div>

<svg class="a" style="left:392px;top:567px" width="38" height="50"><path d="M.5.5H30L37 6V49H.5Z" fill="#fff" stroke="#dcdcdc"/><rect x="1" y="33" width="35.5" height="15.5" fill="#f0f1f2"/></svg>
<svg class="a" style="left:401px;top:589px" width="18" height="18"><use href="#reel"/></svg>
<div class="a" style="left:387px;top:571px;width:36px;height:14px;background:#5e6070"></div>
<div class="t fmt" style="left:392px;top:578px;color:#fff;font-size:11.2px">MP4</div>
<div class="t fmt" style="left:397px;top:607px;color:#666">HEVC</div>

<svg class="a" style="left:461px;top:567px" width="38" height="50"><path d="M.5.5H30L37 6V49H.5Z" fill="#fff" stroke="#dcdcdc"/><rect x="1" y="33" width="35.5" height="15.5" fill="#f0f1f2"/></svg>
<svg class="a" style="left:470px;top:589px" width="18" height="18"><use href="#reel"/></svg>
<div class="a" style="left:456px;top:571px;width:36px;height:14px;background:#5e6070"></div>
<div class="t fmt" style="left:466px;top:578px;color:#fff;font-size:11.2px">4K</div>
<div class="t fmt" style="left:467px;top:607px;color:#666">H264</div>

<div class="a" style="left:546px;top:567px;width:1px;height:9px;background:#ddd"></div>
<div class="a" style="left:546px;top:608px;width:1px;height:9px;background:#ddd"></div>
<div class="a" style="left:533px;top:578px;width:28px;height:28px;border-radius:50%;background:#fff;box-shadow:0 1px 2px #d0d0d0"></div>
<svg class="a" style="left:540px;top:585px" width="14" height="14"><path d="M7 0V14M0 7H14" stroke="#777" stroke-width="1"/></svg>

<!-- tabs -->
<div class="a" style="left:16px;top:641px;width:1007px;height:26px;background:linear-gradient(#e6e6e7,#efeff0);border-top:1px solid #c9c9c9"></div>
<div class="a" style="left:16px;top:642px;width:224px;height:25px;background:linear-gradient(100deg,#dcdcdd,#ececed 60%)"></div>
<div class="tab" style="left:240px;background:#f6f6f7;border-left:1px solid #cfcfcf;border-top:none;border-radius:3px 3px 0 0">流行</div>
<div class="tab" style="left:335px;border-left:1px solid #cfcfcf;border-radius:3px 0 0 0">视频</div>
<div class="tab" style="left:430px">设备</div>
<div class="tab" style="left:525px">音乐</div>
<div class="tab" style="left:620px;width:94px">工具</div>

<!-- run -->
<svg class="a" style="left:905px;top:570px" width="118" height="97" viewBox="0 0 118 97"><path d="M5 97C14 93 18 88 18 75 18 35 40 8 71 8 90 8 103 22 111 36 113 40 115 42 118 43V97Z" fill="#dcdde0"/><circle cx="70" cy="58" r="40" fill="#c6c7ca"/><circle cx="70" cy="58" r="36" fill="#eeeeef"/><circle cx="70" cy="58" r="33" fill="#5cbdf5"/></svg>
<div class="a" style="left:944px;top:597px;width:62px;height:62px;border-radius:50%;background:radial-gradient(circle at 50% 90%,#1f8ef0 0,#0f6fd2 45%,#0a5cb8 75%,#1068c8 100%)"></div>
<div class="a" style="left:952px;top:599px;width:46px;height:22px;border-radius:50%;background:linear-gradient(rgba(255,255,255,.42),rgba(255,255,255,.04))"></div>
<div class="t" style="left:954px;top:629px;font-size:17.5px;font-weight:bold;color:#fff;letter-spacing:1.2px">RUN</div>
</div>
</body></html>
